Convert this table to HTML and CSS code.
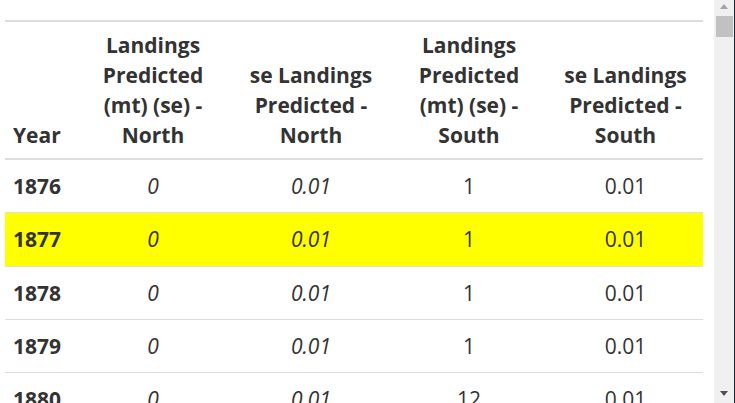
FILE: index.html
```html
<!DOCTYPE html>
<html>
<head>
<meta charset="utf-8">
<link rel="stylesheet" href="styles.css">
</head>
<body>
<div class="frame">
  <div class="content">
    <table class="tbl">
      <colgroup>
        <col class="c1"><col class="c2"><col class="c3"><col class="c4"><col class="c5">
      </colgroup>
      <thead>
        <tr>
          <th class="left">Year</th>
          <th>Landings<br>Predicted<br>(mt) (se) -<br>North</th>
          <th>se Landings<br>Predicted -<br>North</th>
          <th>Landings<br>Predicted<br>(mt) (se) -<br>South</th>
          <th>se Landings<br>Predicted -<br>South</th>
        </tr>
      </thead>
      <tbody>
        <tr><td class="year">1876</td><td class="it">0</td><td class="it">0.01</td><td>1</td><td>0.01</td></tr>
        <tr class="hl"><td class="year">1877</td><td class="it">0</td><td class="it">0.01</td><td>1</td><td>0.01</td></tr>
        <tr><td class="year">1878</td><td class="it">0</td><td class="it">0.01</td><td>1</td><td>0.01</td></tr>
        <tr><td class="year">1879</td><td class="it">0</td><td class="it">0.01</td><td>1</td><td>0.01</td></tr>
        <tr><td class="year">1880</td><td class="it">0</td><td class="it">0.01</td><td>12</td><td>0.01</td></tr>
      </tbody>
    </table>
  </div>
  <div class="scrollbar">
    <div class="arrow up"></div>
    <div class="thumb"></div>
    <div class="track"></div>
    <div class="arrow down"></div>
  </div>
</div>
</body>
</html>
```

FILE: styles.css
```css
html, body {
  margin: 0;
  padding: 0;
  background: #fff;
}
body {
  width: 735px;
  height: 403px;
  overflow: hidden;
  font-family: "Open Sans", "Noto Sans", sans-serif;
  color: #333;
}
.frame {
  display: flex;
  height: 403px;
}
.content {
  width: 714px;
  height: 403px;
  overflow: hidden;
  padding-top: 20px;
  box-sizing: border-box;
}
.tbl {
  margin-left: 5px;
  width: 698px;
  border-collapse: collapse;
  table-layout: fixed;
  font-size: 21px;
  border-top: 2px solid #ddd;
}
.c1 { width: 69px; }
.c2 { width: 158px; }
.c3 { width: 158px; }
.c4 { width: 158px; }
.c5 { width: 155px; }
th {
  font-weight: 700;
  line-height: 30px;
  padding: 8px 8px;
  text-align: center;
  vertical-align: bottom;
  border-bottom: 2px solid #ddd;
  white-space: nowrap;
}
th.left { text-align: left; }
td {
  line-height: 29px;
  padding: 12px 8px 11.3px;
  text-align: center;
  vertical-align: middle;
  border-bottom: 1px solid #ddd;
  white-space: nowrap;
}
td.year {
  text-align: left;
  font-weight: 700;
}
td.it { font-style: italic; }
tr.hl td { background: #ffff00; }
.scrollbar {
  width: 20px;
  height: 403px;
  background: #f0f0f0;
  border-right: 1px solid #1b2235;
  display: flex;
  flex-direction: column;
  align-items: flex-start;
}
.arrow {
  width: 0;
  height: 0;
  margin-left: 6px;
  border-left: 4.5px solid transparent;
  border-right: 4.5px solid transparent;
}
.arrow.up {
  margin-top: 4px;
  border-bottom: 5px solid #a3a3a3;
}
.arrow.down {
  margin-bottom: 7px;
  border-top: 5px solid #505050;
}
.thumb {
  margin-top: 7px;
  margin-left: 2px;
  width: 17px;
  height: 21px;
  background: #c1c1c1;
}
.track { flex: 1; }
```
